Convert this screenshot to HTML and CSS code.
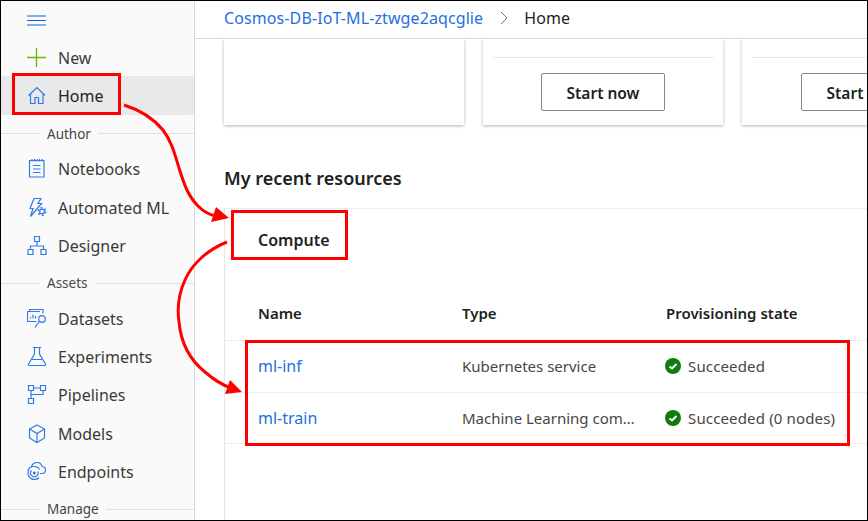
FILE: index.html
```html
<!doctype html>
<html lang="en">
<head>
  <meta charset="UTF-8">
  <meta name="viewport" content="width=device-width, initial-scale=1.0">
  <title>Azure Machine Learning Home</title>
  <link rel="stylesheet" href="styles.css">
</head>
<body>
  <div class="frame">
    <nav class="sidebar">
      <div class="menu-row">
        <svg class="icon" viewBox="0 0 20 20"><path class="stroke" d="M0 1h19M0 5.500h19M0 10h19"/></svg>
      </div>
      <a class="nav-item">
        <svg class="icon" viewBox="0 0 20 20"><path class="plus" d="M9.500 0v19M0 9.500h19"/></svg>
        New
      </a>
      <a class="nav-item active">
        <svg class="icon" viewBox="0 0 20 20"><path class="stroke" d="M1.500 9.500 10 1.500l8 8M3.500 8v9.500h4.500v-6h3.500v6h4.500V8"/></svg>
        Home
      </a>
      <div class="nav-section"><span>Author</span></div>
      <a class="nav-item">
        <svg class="icon" viewBox="0 0 20 20"><path class="stroke" d="M2.500 1.500h14.500v16.500H2.500zM5 0v2.500M7.500 0v2.500M10 0v2.500M12.500 0v2.500M15 0v2.500M6 6.500h7.500M6 10h7.500M6 13.500h7.500"/></svg>
        Notebooks
      </a>
      <a class="nav-item">
        <svg class="icon" viewBox="0 0 20 20"><path class="stroke" d="M7 .5h7l-3 5h3.500L3.500 18.500l2.500-8H3z"/><circle class="stroke" cx="15" cy="13.500" r="2.300"/><circle class="gear" cx="15" cy="13.500" r="3.800"/></svg>
        Automated ML
      </a>
      <a class="nav-item">
        <svg class="icon" viewBox="0 0 20 20"><path class="stroke" d="M7.500 0.500h5v5h-5zM1 13.500h5v5H1zM14 13.500h5v5h-5zM10 5.500v4.500M3.500 13.500V10h13v3.500"/></svg>
        Designer
      </a>
      <div class="nav-section"><span>Assets</span></div>
      <a class="nav-item">
        <svg class="icon" viewBox="0 0 20 20"><path class="stroke" d="M2.500 2.500V.5h13.500v4M.5 2.500h12.500M.5 2.500v10h9M3.500 9.500V8M6 9.500V5.500M8.500 9.500V7M12.500 12l-4.500 6.500"/><circle class="stroke" cx="15" cy="10" r="3.300"/></svg>
        Datasets
      </a>
      <a class="nav-item">
        <svg class="icon" viewBox="0 0 20 20"><path class="stroke" d="M6 0.500h8M7.500 0.500v6.500L1.500 17a1 1 0 0 0 1 1.500h15a1 1 0 0 0 1-1.500l-6-10V0.500M5 12.500h10"/></svg>
        Experiments
      </a>
      <a class="nav-item">
        <svg class="icon" viewBox="0 0 20 20"><path class="stroke" d="M1.500 0.500h5v5h-5zM13.500 0.500h5v5h-5zM1.500 13.500h5v5h-5zM4 5.500v8M6.500 3h7M4 9.500h12V5.500"/></svg>
        Pipelines
      </a>
      <a class="nav-item">
        <svg class="icon" viewBox="0 0 20 20"><path class="stroke" d="M10 1l7.500 4v9L10 18.500 2.500 14V5zM2.500 5l7.500 4.500L17.500 5M10 9.500v9"/></svg>
        Models
      </a>
      <a class="nav-item">
        <svg class="icon" viewBox="0 0 20 20"><path class="stroke" d="M4.500 4.500C5.500 2 7.500.5 10 .5c2.500 0 4.500 1.500 5 4 2 0 3.500 1.500 3.500 3.500s-1.500 3.500-3.500 3.500h-2M.8 8.500C1.800 6 4 4.500 7 4.500c2.500 0 4.500 1 5.500 3M2 7.500A6.500 6.500 0 0 0 7.500 17.500c2 0 3.500-.8 4.500-2M4.500 8.500a3.800 3.800 0 1 0 6.300 1"/><circle class="fill" cx="7.300" cy="11" r="1.500"/></svg>
        Endpoints
      </a>
      <div class="nav-section"><span>Manage</span></div>
    </nav>

    <div class="main">
      <header class="topbar">
        <a class="crumb">Cosmos-DB-IoT-ML-ztwge2aqcglie</a>
        <svg class="chevron" viewBox="0 0 8 14"><path d="M1 1l6 6-6 6"/></svg>
        <span class="crumb-here">Home</span>
      </header>

      <div class="content">
        <div class="cards">
          <div class="card"></div>
          <div class="card">
            <hr>
            <button class="start">Start now</button>
          </div>
          <div class="card">
            <hr>
            <button class="start">Start now</button>
          </div>
        </div>

        <h2 class="section-title">My recent resources</h2>

        <section class="recent">
          <h3>Compute</h3>
          <div class="table">
            <div class="tr th">
              <div>Name</div><div>Type</div><div>Provisioning state</div>
            </div>
            <div class="tr">
              <div><a class="link">ml-inf</a></div>
              <div class="type">Kubernetes service</div>
              <div class="state">
                <svg class="check" viewBox="0 0 16 16"><circle cx="8" cy="8" r="8"/><path d="M4.500 8.500l2.500 2 4.500-4.500"/></svg>
                Succeeded
              </div>
            </div>
            <div class="tr">
              <div><a class="link">ml-train</a></div>
              <div class="type">Machine Learning compute</div>
              <div class="state">
                <svg class="check" viewBox="0 0 16 16"><circle cx="8" cy="8" r="8"/><path d="M4.500 8.500l2.500 2 4.500-4.500"/></svg>
                Succeeded (0 nodes)
              </div>
            </div>
          </div>
        </section>
      </div>
    </div>

    <!-- red annotations drawn over the screenshot -->
    <svg class="notes" viewBox="0 0 868 521">
      <rect x="13.500" y="74.500" width="106" height="39"/>
      <rect x="232.500" y="211.500" width="114" height="47"/>
      <rect x="246.500" y="341.500" width="602" height="103"/>
      <path d="M124 105C140 110 153 118 163 130C172 142 175 155 179 168C184 184 188 196 198 206C204 212 210 215 216 216"/>
      <polygon points="229,218 216,207 211,222"/>
      <path d="M227 242C207 250 192 264 185 280C179 293 177 308 179 322C181 344 190 360 205 372C213 379 222 385 231 388"/>
      <polygon points="242,392 230,380 225,394"/>
    </svg>
  </div>
</body>
</html>
```

FILE: styles.css
```css
* { box-sizing: border-box; }
html, body { margin: 0; height: 100%; }
body { font-family: 'Noto Sans', 'Open Sans', sans-serif; font-size: 15px; color: #323130; background: #fff; overflow: hidden; }

.frame { position: relative; display: flex; width: 868px; height: 521px; border: 1px solid #000; overflow: hidden; }

.sidebar { flex: 0 0 194px; background: #fafafa; border-right: 1px solid #d6d6d6; }
.menu-row { height: 38px; padding: 14px 0 0 26px; }
.nav-item { display: flex; align-items: center; gap: 11px; height: 38.3px; padding-left: 26px; font-size: 16px; color: #3b3a39; border-radius: 0 3px 3px 0; }
.nav-item.active { background: #e9e9e9; color: #201f1e; margin-top: -1px; margin-bottom: 1px; padding-top: 2px; }
.nav-section { display: flex; align-items: center; gap: 7px; height: 34.5px; padding-top: 2px; font-size: 13.5px; color: #484644; }
.nav-section::before { content: ""; width: 39px; border-top: 1px solid #e0e0e0; }
.nav-section::after { content: ""; flex: 1; border-top: 1px solid #e0e0e0; }

.icon { width: 20px; height: 20px; flex: none; }
.stroke { fill: none; stroke: #2f7ae5; stroke-width: 1.2; }
.fill { fill: #2f7ae5; }
.gear { fill: none; stroke: #2f7ae5; stroke-width: 1.4; stroke-dasharray: 2 1.980; }
.menu-row .stroke { stroke: #0a62d0; stroke-width: 1.2; }
.plus { fill: none; stroke: #6bb700; stroke-width: 1.3; }

.main { flex: 1; min-width: 0; display: flex; flex-direction: column; }
.topbar { display: flex; align-items: center; flex: 0 0 38px; padding: 0 0 3px 29px; border-bottom: 1px solid #d9d9d9; font-size: 16px; letter-spacing: .1px; }
.crumb { color: #1f6fe0; }
.chevron { width: 8px; height: 14px; margin: 0 16px 0 17px; }
.chevron path { fill: none; stroke: #777; stroke-width: 1; }
.crumb-here { color: #201f1e; }

.content { flex: 1; padding-left: 29px; overflow: hidden; }
.cards { display: flex; gap: 19px; }
.card { flex: 0 0 240px; height: 86px; background: #fff; padding: 18px 9px 0 10px; box-shadow: 0 1px 3px rgba(0, 0, 0, .3); }
.card hr { margin: 0 0 15px; border: 0; border-top: 1px solid #e8e8e8; }
.start { display: block; width: 124px; height: 38px; margin: 0 0 0 48px; padding: 1px 0 0; background: #fff; border: 1px solid #8a8886; border-radius: 2px; font: 600 15.500px 'Noto Sans', sans-serif; color: #201f1e; }
.card:last-child .start { margin-left: 49px; }

.section-title { margin: 40px 0 16px; font-size: 18px; line-height: 27px; font-weight: 600; color: #201f1e; }

.recent { border-top: 1px solid #eee; border-left: 1px solid #e6e6e6; height: 320px; margin-right: -10px; padding-left: 33px; }
.recent h3 { margin: 19px 0 0; font-size: 16px; line-height: 24px; font-weight: 600; color: #201f1e; }
.table { margin: 51px 0 0 -33px; }
.tr { display: grid; grid-template-columns: 204px 204px 1fr; align-items: center; height: 51.500px; padding-left: 33px; border-bottom: 1px solid #eee; font-size: 15px; }
.tr > div { white-space: nowrap; overflow: hidden; text-overflow: ellipsis; padding-right: 24px; }
.tr.th { height: 38px; font-weight: 600; color: #201f1e; align-items: flex-start; }
.link { color: #1f6fe0; font-size: 16px; }
.type { color: #484644; }
.state { display: flex; align-items: center; gap: 7px; margin-left: -1px; color: #484644; letter-spacing: .15px; }
.check { width: 16px; height: 16px; flex: none; }
.check circle { fill: #107c10; }
.check path { fill: none; stroke: #fff; stroke-width: 2; }

.notes { position: absolute; left: -1px; top: -1px; width: 868px; height: 521px; pointer-events: none; }
.notes rect, .notes path { fill: none; stroke: #f00; stroke-width: 3; }
.notes polygon { fill: #f00; }
```
